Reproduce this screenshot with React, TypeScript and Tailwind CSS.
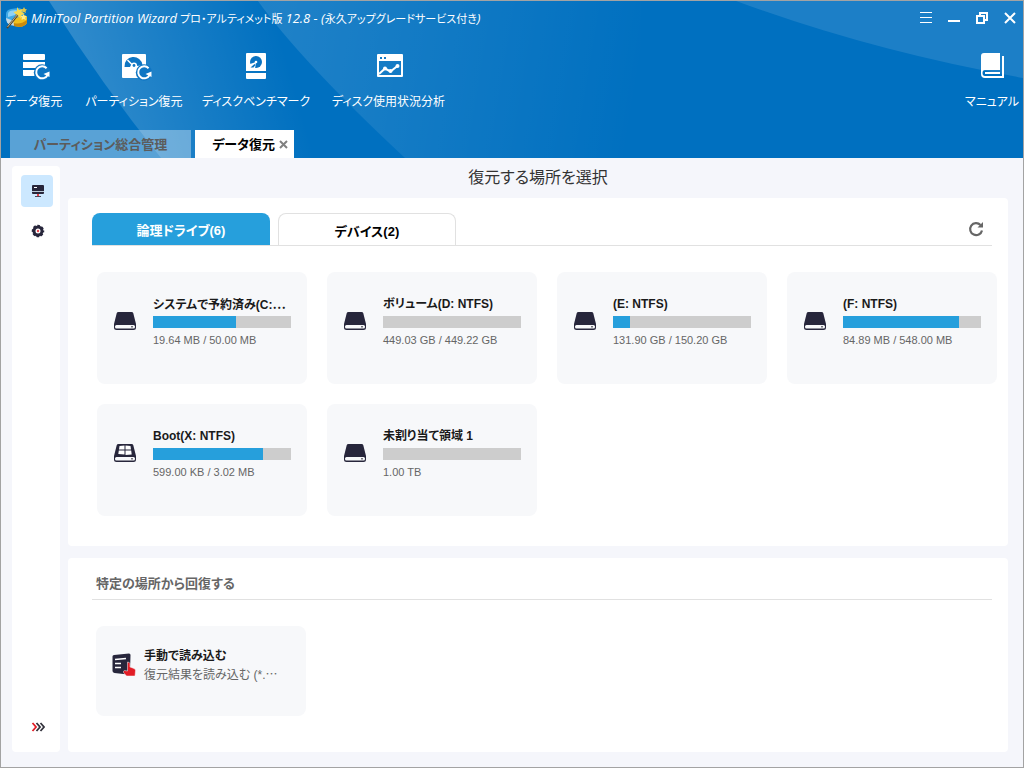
import { useState, type ReactNode } from 'react';

type Drive = {
  name: string;
  usage: string;
  percent: number;
  system?: boolean;
  truncated?: boolean;
};

const drives: Drive[] = [
  { name: 'システムで予約済み(C:', usage: '19.64 MB / 50.00 MB', percent: 60, truncated: true },
  { name: 'ボリューム(D: NTFS)', usage: '449.03 GB / 449.22 GB', percent: 0 },
  { name: '(E: NTFS)', usage: '131.90 GB / 150.20 GB', percent: 12 },
  { name: '(F: NTFS)', usage: '84.89 MB / 548.00 MB', percent: 84 },
  { name: 'Boot(X: NTFS)', usage: '599.00 KB / 3.02 MB', percent: 80, system: true },
  { name: '未割り当て領域 1', usage: '1.00 TB', percent: 0 },
];

function Ellipsis() {
  return <span className="font-['Noto_Sans_CJK_JP',sans-serif]">…</span>;
}

function Logo() {
  return (
    <svg width="23" height="23" viewBox="0 0 23 23" aria-hidden="true">
      <path d="M1 8 Q1 4 6 3 L13 2 Q17 2 18 6 L19 11 L8 15 L1 13Z" fill="#3fa9e6" />
      <path d="M3 8 Q3 5 7 4.500 L12 4 L10 9 L3 11Z" fill="#8fd2f5" />
      <path d="M1 12 L9 15 L10 20 L5 19 Q1 17 1 12Z" fill="#c5d9e4" />
      <path d="M8 13 L20 9 L22 11 V17 Q20 20 15 21 L9 20Z" fill="#f0c01c" />
      <path d="M9 17 Q15 19 22 14 V17 Q20 20 15 21 L9 20Z" fill="#c98a0c" />
      <path d="M12 1 L14 4 L17.500 3 L16.500 6 L20 8 L16.500 9 L16.500 13 L13.500 10.500 L10 12 L11 8.500 L8.500 6 L12 5Z" fill="#f7d94c" />
      <path d="M19 1 L20 3 L22 3.500 L20.500 5 L21 7 L19 6 L17 7 L17.500 5 L16 3.500 L18 3Z" fill="#e3c648" />
      <path d="M18.500 8 L19.500 10 L22 10 L20.200 11.800 L21 14 L18.500 13 L16.500 14 L17 11.500 L15.500 10 L17.700 10Z" fill="#ffec8c" />
      <path d="M2 22 L12.500 9" stroke="#54452c" strokeWidth="2" />
      <path d="M2.500 21 L12.500 8.500" stroke="#d8c9a0" strokeWidth="0.800" />
    </svg>
  );
}

/* circular arrow in the corner of the recovery icons */
function RestoreBadge({ x }: { x: number }) {
  return (
    <g transform={`translate(${x} 20.500)`}>
      <circle r="8.200" fill="#0f76c3" />
      <path d="M4.600 -4.300 A6 6 0 1 0 5.600 2.500" fill="none" stroke="#fff" strokeWidth="2" />
      <path d="M1.500 1.500 L7.500 -1 L7.500 4.500Z" fill="#fff" />
    </g>
  );
}

function DataRecoveryIcon() {
  return (
    <svg width="32" height="28" viewBox="0 0 32 28" aria-hidden="true">
      <rect x="5" y="2" width="22" height="6" rx="1" fill="#fff" />
      <rect x="5" y="10" width="22" height="6" fill="#fff" />
      <path d="M5 18 H27 V24 H6 Q5 24 5 23Z" fill="#fff" />
      <RestoreBadge x={24} />
    </svg>
  );
}

function PartitionRecoveryIcon() {
  return (
    <svg width="32" height="28" viewBox="0 0 32 28" className="overflow-visible" aria-hidden="true">
      <rect x="4" y="2" width="24" height="24" rx="1" fill="#fff" />
      <path d="M6.500 15 A9 9 0 0 1 24.500 13 L19.500 14 A4 4 0 0 0 12 15Z" fill="#0f76c3" />
      <path d="M9.500 8 L14 12.500" stroke="#fff" strokeWidth="1.500" />
      <circle cx="16" cy="13.500" r="3" fill="#fff" />
      <circle cx="16" cy="13.500" r="1.400" fill="#0f76c3" />
      <RestoreBadge x={26} />
    </svg>
  );
}

function BenchmarkIcon() {
  return (
    <svg width="30" height="28" viewBox="0 0 30 28" aria-hidden="true">
      <path d="M6 1 H24 Q25 1 25 2 V19 H5 V2 Q5 1 6 1Z" fill="#fff" />
      <path d="M5 21 H25 V26 Q25 27 24 27 H6 Q5 27 5 26Z" fill="#fff" />
      <circle cx="15" cy="10" r="6" fill="#0a73c1" />
      <path d="M15 10 L9 12 L8 17 H14Z" fill="#fff" />
      <path d="M9.500 15.500 L13.500 12 L14.500 13 L12.500 15.500Z" fill="#0a73c1" />
      <circle cx="15" cy="10" r="1.300" fill="#fff" />
    </svg>
  );
}

function UsageIcon() {
  return (
    <svg width="30" height="28" viewBox="-1 0 30 28" aria-hidden="true">
      <path
        fillRule="evenodd"
        d="M3 2 H27 Q28 2 28 3 V24 Q28 25 27 25 H3 Q2 25 2 24 V3 Q2 2 3 2Z M4 9 V23 H26 V9Z"
        fill="#fff"
      />
      <rect x="5" y="5" width="2" height="2" fill="#1279c5" />
      <rect x="9" y="5" width="2" height="2" fill="#1279c5" />
      <path d="M4 22 L10 16.500 L15.500 19.500 L23 13.500" fill="none" stroke="#fff" strokeWidth="2" />
      <circle cx="10" cy="16.500" r="2" fill="#fff" />
      <circle cx="15.500" cy="19" r="2" fill="#fff" />
      <circle cx="22.500" cy="14" r="2" fill="#fff" />
    </svg>
  );
}

function ManualIcon() {
  return (
    <svg width="30" height="28" viewBox="0 0 30 28" aria-hidden="true">
      <path
        d="M7 1 H23 V18 H8 Q5.500 18 5.500 21 Q5.500 24 8 24 H25 V4 H27 V26 H8 Q4 26 4 22 V4 Q4 1 7 1Z"
        fill="#fff"
      />
      <rect x="8" y="20" width="15" height="2" fill="#fff" />
    </svg>
  );
}

function DriveIcon({ system }: { system?: boolean }) {
  return (
    <svg width="24" height="20" viewBox="0 0 24 20" aria-hidden="true">
      <path
        d="M5.500 1 H18.500 Q20 1 20.300 2.300 L23 13 V16.500 Q23 19 20.500 19 H3.500 Q1 19 1 16.500 V13 L3.700 2.300 Q4 1 5.500 1Z"
        fill="#27263b"
      />
      <rect x="2" y="14" width="20" height="3.500" rx="1.500" fill="#f7f8fa" />
      <rect x="18" y="15" width="2" height="1.500" fill="#77777f" />
      {system && (
        <>
          <path d="M6.500 3 L11.500 2.500 V6.500 H6Z M12.500 2.500 L17.500 3 L18 6.500 H12.500Z" fill="#fff" />
          <path d="M5.800 7.500 H11.500 V11.500 L5.300 11Z M12.500 7.500 H18.200 L18.700 11.500 L12.500 12Z" fill="#fff" />
        </>
      )}
    </svg>
  );
}

function LoadIcon() {
  return (
    <svg width="24" height="24" viewBox="0 0 24 24" aria-hidden="true">
      <path
        d="M2 2 L17 0.500 Q18.500 0.500 18.500 2 L18 20 L16 21.500 L2.500 20 Q0.500 19.500 0.500 18 V3.500 Q0.500 2 2 2Z"
        fill="#27263b"
      />
      <path d="M3 6.500 L14 5.500" stroke="#fff" strokeWidth="1.500" />
      <path d="M3 10.500 H9 M3 14.500 H9" stroke="#fff" strokeWidth="1.500" />
      <path
        d="M15.500 9 Q17.500 9 18 10.500 V14 L22 15.500 Q23.500 16 23.500 17.500 L23 23 H14.500 L11.500 19.500 Q11 18 12.500 17.500 L15.500 18Z"
        fill="#e21d26"
        stroke="#f7f8fa"
        strokeWidth="0.500"
      />
    </svg>
  );
}

function HeaderBackdrop() {
  return (
    <svg
      className="absolute inset-0 h-full w-full"
      viewBox="0 0 1022 157"
      preserveAspectRatio="none"
      aria-hidden="true"
    >
      <defs>
        <linearGradient id="beam" gradientUnits="userSpaceOnUse" x1="60" y1="60" x2="270" y2="0">
          <stop offset="0" stopColor="#fff" stopOpacity="0.2" />
          <stop offset="1" stopColor="#fff" stopOpacity="0" />
        </linearGradient>
        <linearGradient id="sweep" gradientUnits="userSpaceOnUse" x1="270" y1="80" x2="630" y2="140">
          <stop offset="0" stopColor="#fff" stopOpacity="0.12" />
          <stop offset="1" stopColor="#fff" stopOpacity="0" />
        </linearGradient>
      </defs>
      <path d="M48 0 Q102 85 160 157 H400 L258 0Z" fill="url(#beam)" />
      <path d="M257 0 Q300 60 404 157 H640 V0Z" fill="url(#sweep)" />
      <path d="M735 0 Q870 50 1022 77 V0Z" fill="#fff" fillOpacity="0.11" />
    </svg>
  );
}

type ToolProps = { icon: ReactNode; label: string; width: string };

function ToolButton({ icon, label, width }: ToolProps) {
  return (
    <button
      type="button"
      className={`flex shrink-0 flex-col items-center gap-[14px] whitespace-nowrap text-[12px] leading-4 text-white ${width}`}
    >
      {icon}
      <span>{label}</span>
    </button>
  );
}

function WindowControls() {
  const button = 'flex h-8 w-7 items-center justify-center pl-0.5';

  return (
    <div className="flex">
      <button type="button" aria-label="メニュー" className={button}>
        <svg width="12" height="12" viewBox="0 0 12 12" fill="#fff">
          <path d="M0 0H12V1H0Z M0 5H12V6H0Z M0 10H12V11H0Z" />
        </svg>
      </button>
      <button type="button" aria-label="最小化" className={button}>
        <svg width="12" height="12" viewBox="0 0 12 12" fill="#fff">
          <rect y="8" width="12" height="2" />
        </svg>
      </button>
      <button type="button" aria-label="元に戻す" className={button}>
        <svg width="12" height="12" viewBox="0 0 12 12" fill="none" stroke="#fff">
          <rect x="1" y="4" width="7" height="7" strokeWidth="2" />
          <path d="M4 3V1H11V8H9" strokeWidth="2" />
        </svg>
      </button>
      <button type="button" aria-label="閉じる" className={button}>
        <svg width="12" height="12" viewBox="0 0 12 12" fill="none" stroke="#fff">
          <path d="M1 1L11 11M11 1L1 11" strokeWidth="2" />
        </svg>
      </button>
    </div>
  );
}

function Header() {
  const latin = "font-['Open_Sans',sans-serif] text-[13px] italic";

  return (
    <header className="relative bg-[#0070c0]">
      <HeaderBackdrop />
      <div className="relative">
        <div className="flex h-[33px] items-center pl-1">
          <Logo />
          <h1 className="ml-[3px] flex-1 pt-px text-[11px] leading-4 whitespace-nowrap text-white">
            <span className={latin}>MiniTool Partition Wizard</span>
            {' プロ・アルティメット版 '}
            <span className={latin}>12.8 - (</span>
            永久アップグレードサービス付き
            <span className={latin}>)</span>
          </h1>
          <WindowControls />
        </div>

        <div className="flex items-start gap-[25px] pt-[18px] pr-[6px] pl-1">
          <ToolButton icon={<DataRecoveryIcon />} label="データ復元" width="w-[57px]" />
          <ToolButton icon={<PartitionRecoveryIcon />} label="パーティション復元" width="w-[94px]" />
          <ToolButton icon={<BenchmarkIcon />} label="ディスクベンチマーク" width="w-[100px]" />
          <ToolButton icon={<UsageIcon />} label="ディスク使用状況分析" width="w-[115px]" />
          <div className="flex-1" />
          <ToolButton icon={<ManualIcon />} label="マニュアル" width="w-[50px]" />
        </div>

        <nav className="mt-5 flex h-7 gap-1 pl-[9px] text-[13px] leading-4 font-bold">
          <button type="button" className="w-[181px] bg-white/35 pt-0.5 text-[#5c5c5c]">
            パーティション総合管理
          </button>
          <div className="flex w-[99px] items-center justify-end gap-1 bg-white pr-[6px] text-black">
            <button type="button" className="pt-0.5">
              データ復元
            </button>
            <button type="button" aria-label="タブを閉じる">
              <svg width="9" height="9" viewBox="0 0 9 9" stroke="#808080" strokeWidth="2">
                <path d="M1 1L8 8M8 1L1 8" />
              </svg>
            </button>
          </div>
        </nav>
      </div>
    </header>
  );
}

function Sidebar() {
  const item = 'flex h-8 w-8 items-center justify-center rounded pl-0.5';

  return (
    <aside className="flex w-12 shrink-0 flex-col items-center gap-2 rounded bg-white py-[9px] pl-0.5">
      <button type="button" aria-label="この PC" className={`${item} bg-[#cce8ff]`}>
        <svg width="14" height="14" viewBox="0 0 14 14">
          <rect x="1" y="1" width="12" height="9" rx="1" fill="#27263b" />
          <path d="M1 7.500H13" stroke="#b9c9d8" />
          <path d="M3 3.500H6" stroke="#fff" />
          <path d="M7 10V12" stroke="#e8434b" strokeWidth="2" />
          <path d="M4 12.500H10" stroke="#4a4658" />
        </svg>
      </button>
      <button type="button" aria-label="設定" className={item}>
        <svg width="14" height="14" viewBox="0 0 14 14">
          <circle cx="7" cy="7" r="4" fill="none" stroke="#27263b" strokeWidth="3" />
          <circle
            cx="7"
            cy="7"
            r="5.500"
            fill="none"
            stroke="#27263b"
            strokeWidth="1.500"
            strokeDasharray="2.600 1.720"
            strokeDashoffset="1.300"
          />
          <circle cx="7" cy="7" r="1.200" fill="#e8434b" />
        </svg>
      </button>
      <button type="button" aria-label="展開" className={`${item} mt-auto`}>
        <svg width="14" height="10" viewBox="0 0 14 10" fill="none" strokeWidth="1.800">
          <path d="M1.500 1L5 5L1.500 9" stroke="#e21d26" />
          <path d="M5.500 1L9 5L5.500 9" stroke="#33323c" />
          <path d="M9.500 1L13 5L9.500 9" stroke="#33323c" />
        </svg>
      </button>
    </aside>
  );
}

function DriveCard({ name, usage, percent, system, truncated }: Drive) {
  return (
    <button
      type="button"
      className="flex h-28 items-start rounded-lg bg-[#f7f8fa] pt-6 pr-4 pl-4 text-left"
    >
      <span className="mt-[15px] mr-4 shrink-0">
        <DriveIcon system={system} />
      </span>
      <span className="min-w-0 flex-1">
        <span className="block h-4 text-[12px] leading-4 font-bold whitespace-nowrap text-[#1a1a1a]">
          {name}
          {truncated && <Ellipsis />}
        </span>
        <span className="mt-1 block h-3 bg-[#cdcdcd]">
          <span className="block h-3 bg-[#269fdc]" style={{ width: `${percent}%` }} />
        </span>
        <span className="mt-1 block h-4 text-[11px] leading-4 whitespace-nowrap text-[#666]">
          {usage}
        </span>
      </span>
    </button>
  );
}

export default function App() {
  const [tab, setTab] = useState<'logical' | 'device'>('logical');

  const activeTab = 'w-[178px] rounded-t-lg bg-[#269fdc] pt-1 text-white';
  const idleTab =
    'w-[178px] rounded-t-lg border border-b-0 border-[#e1e1e1] bg-white pt-1 text-black';

  return (
    <div className="flex min-h-screen flex-col border border-[#a3a3a3] bg-[#f5f6fb] font-['Liberation_Sans','Noto_Sans_CJK_JP',sans-serif] [font-feature-settings:'palt']">
      <Header />

      <div className="flex flex-1 gap-2 pt-2 pr-[15px] pb-[15px] pl-[11px]">
        <Sidebar />

        <main className="flex min-w-0 flex-1 flex-col">
          <h2 className="h-8 text-center text-[16px] leading-6 text-[#333]">復元する場所を選択</h2>

          <section className="rounded bg-white pt-[15px] pb-[30px]">
            <div className="mr-4 ml-6 flex items-center justify-between border-b border-[#e1e1e1]">
              <div role="tablist" className="flex h-8 gap-2 text-[13px] leading-4 font-bold">
                <button
                  type="button"
                  role="tab"
                  aria-selected={tab === 'logical'}
                  onClick={() => setTab('logical')}
                  className={tab === 'logical' ? activeTab : idleTab}
                >
                  論理ドライブ(6)
                </button>
                <button
                  type="button"
                  role="tab"
                  aria-selected={tab === 'device'}
                  onClick={() => setTab('device')}
                  className={tab === 'device' ? activeTab : idleTab}
                >
                  デバイス(2)
                </button>
              </div>
              <button type="button" aria-label="更新" className="mr-2">
                <svg width="16" height="16" viewBox="0 0 16 16">
                  <path
                    d="M14 9.500A6 6 0 1 1 12.500 4"
                    fill="none"
                    stroke="#666"
                    strokeWidth="2.200"
                  />
                  <path d="M15 1V6.500H9.500Z" fill="#666" />
                </svg>
              </button>
            </div>
            <div className="mt-[26px] mr-[11px] ml-[29px] grid grid-cols-[repeat(auto-fill,210px)] gap-5">
              {drives.map((drive) => (
                <DriveCard key={drive.name} {...drive} />
              ))}
            </div>
          </section>

          <section className="mt-3 flex-1 rounded bg-white pt-[18px] pb-9">
            <h3 className="mr-4 ml-6 border-b border-[#e1e1e1] pb-[7px] pl-1 text-[13px] leading-4 font-bold text-[#666]">
              特定の場所から回復する
            </h3>
            <button
              type="button"
              className="mt-[26px] ml-7 flex h-[90px] w-[210px] items-start rounded-lg bg-[#f7f8fa] pt-[22px] pl-4 text-left"
            >
              <span className="mt-[5px] mr-2 shrink-0">
                <LoadIcon />
              </span>
              <span className="whitespace-nowrap">
                <span className="block text-[12px] leading-4 font-bold text-[#1a1a1a]">
                  手動で読み込む
                </span>
                <span className="block text-[12px] leading-5 text-[#666]">
                  復元結果を読み込む (*.
                  <Ellipsis />
                </span>
              </span>
            </button>
          </section>
        </main>
      </div>
    </div>
  );
}
